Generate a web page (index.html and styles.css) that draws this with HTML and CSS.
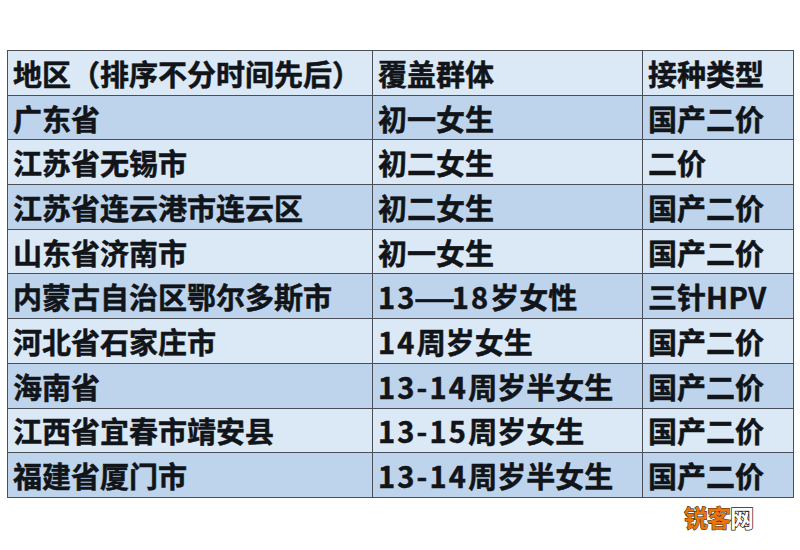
FILE: index.html
```html
<!DOCTYPE html>
<html lang="zh-CN">
<head>
<meta charset="utf-8">
<link rel="stylesheet" href="styles.css">
</head>
<body>
<div class="page">
  <table class="grid">
    <colgroup>
      <col class="c1"><col class="c2"><col class="c3">
    </colgroup>
    <tr class="light"><td>地区（排序不分时间先后）</td><td>覆盖群体</td><td>接种类型</td></tr>
    <tr class="dark"><td>广东省</td><td>初一女生</td><td>国产二价</td></tr>
    <tr class="light"><td>江苏省无锡市</td><td>初二女生</td><td>二价</td></tr>
    <tr class="dark"><td>江苏省连云港市连云区</td><td>初二女生</td><td>国产二价</td></tr>
    <tr class="light"><td>山东省济南市</td><td>初一女生</td><td>国产二价</td></tr>
    <tr class="dark"><td>内蒙古自治区鄂尔多斯市</td><td><span class="num">13<span class="dash">—</span>18</span>岁女性</td><td>三针<span class="lat">HPV</span></td></tr>
    <tr class="light"><td>河北省石家庄市</td><td><span class="num">14</span>周岁女生</td><td>国产二价</td></tr>
    <tr class="dark"><td>海南省</td><td><span class="num">13-14</span>周岁半女生</td><td>国产二价</td></tr>
    <tr class="light"><td>江西省宜春市靖安县</td><td><span class="num">13-15</span>周岁女生</td><td>国产二价</td></tr>
    <tr class="dark"><td>福建省厦门市</td><td><span class="num">13-14</span>周岁半女生</td><td>国产二价</td></tr>
  </table>
  <div class="mark"><span class="mark-o">锐客</span><span class="mark-w">网</span></div>
</div>
</body>
</html>
```
FILE: styles.css
```css
html, body {
  margin: 0;
  padding: 0;
  background: #ffffff;
}
.page {
  width: 800px;
  height: 550px;
  padding-top: 50px;
  padding-left: 7px;
  box-sizing: border-box;
  font-family: "Noto Sans CJK SC", "Noto Sans", sans-serif;
}
.grid {
  border-collapse: collapse;
  table-layout: fixed;
  width: 786px;
}
.c1 { width: 365px; }
.c2 { width: 270px; }
.c3 { width: 151px; }
.grid tr {
  height: 44.7px;
}
.grid td {
  padding: 0 0 0 5px;
  border: 1.5px solid #4a4f57;
  font-size: 29px;
  font-weight: 700;
  color: #111418;
  -webkit-text-stroke: 0.5px #111418;
  line-height: 40px;
  white-space: nowrap;
  overflow: hidden;
}
.num {
  letter-spacing: 2.2px;
}
.dash {
  display: inline-block;
  width: 35px;
  text-align: center;
  letter-spacing: 0;
  transform: scaleX(1.6);
}
.lat {
  letter-spacing: 0.5px;
}
.light td { background: #dbe8f5; }
.dark td { background: #bdd4ec; }
.mark {
  display: flex;
  justify-content: flex-end;
  padding-right: 47px;
  margin-top: 5px;
  font-size: 24px;
  font-weight: 700;
  line-height: 28px;
  letter-spacing: -1px;
}
.mark-o {
  color: #e8740e;
  -webkit-text-stroke: 1px #2a1a08;
  paint-order: stroke fill;
}
.mark-w {
  color: #ffffff;
  -webkit-text-stroke: 1.5px #222222;
  paint-order: stroke fill;
}
```
